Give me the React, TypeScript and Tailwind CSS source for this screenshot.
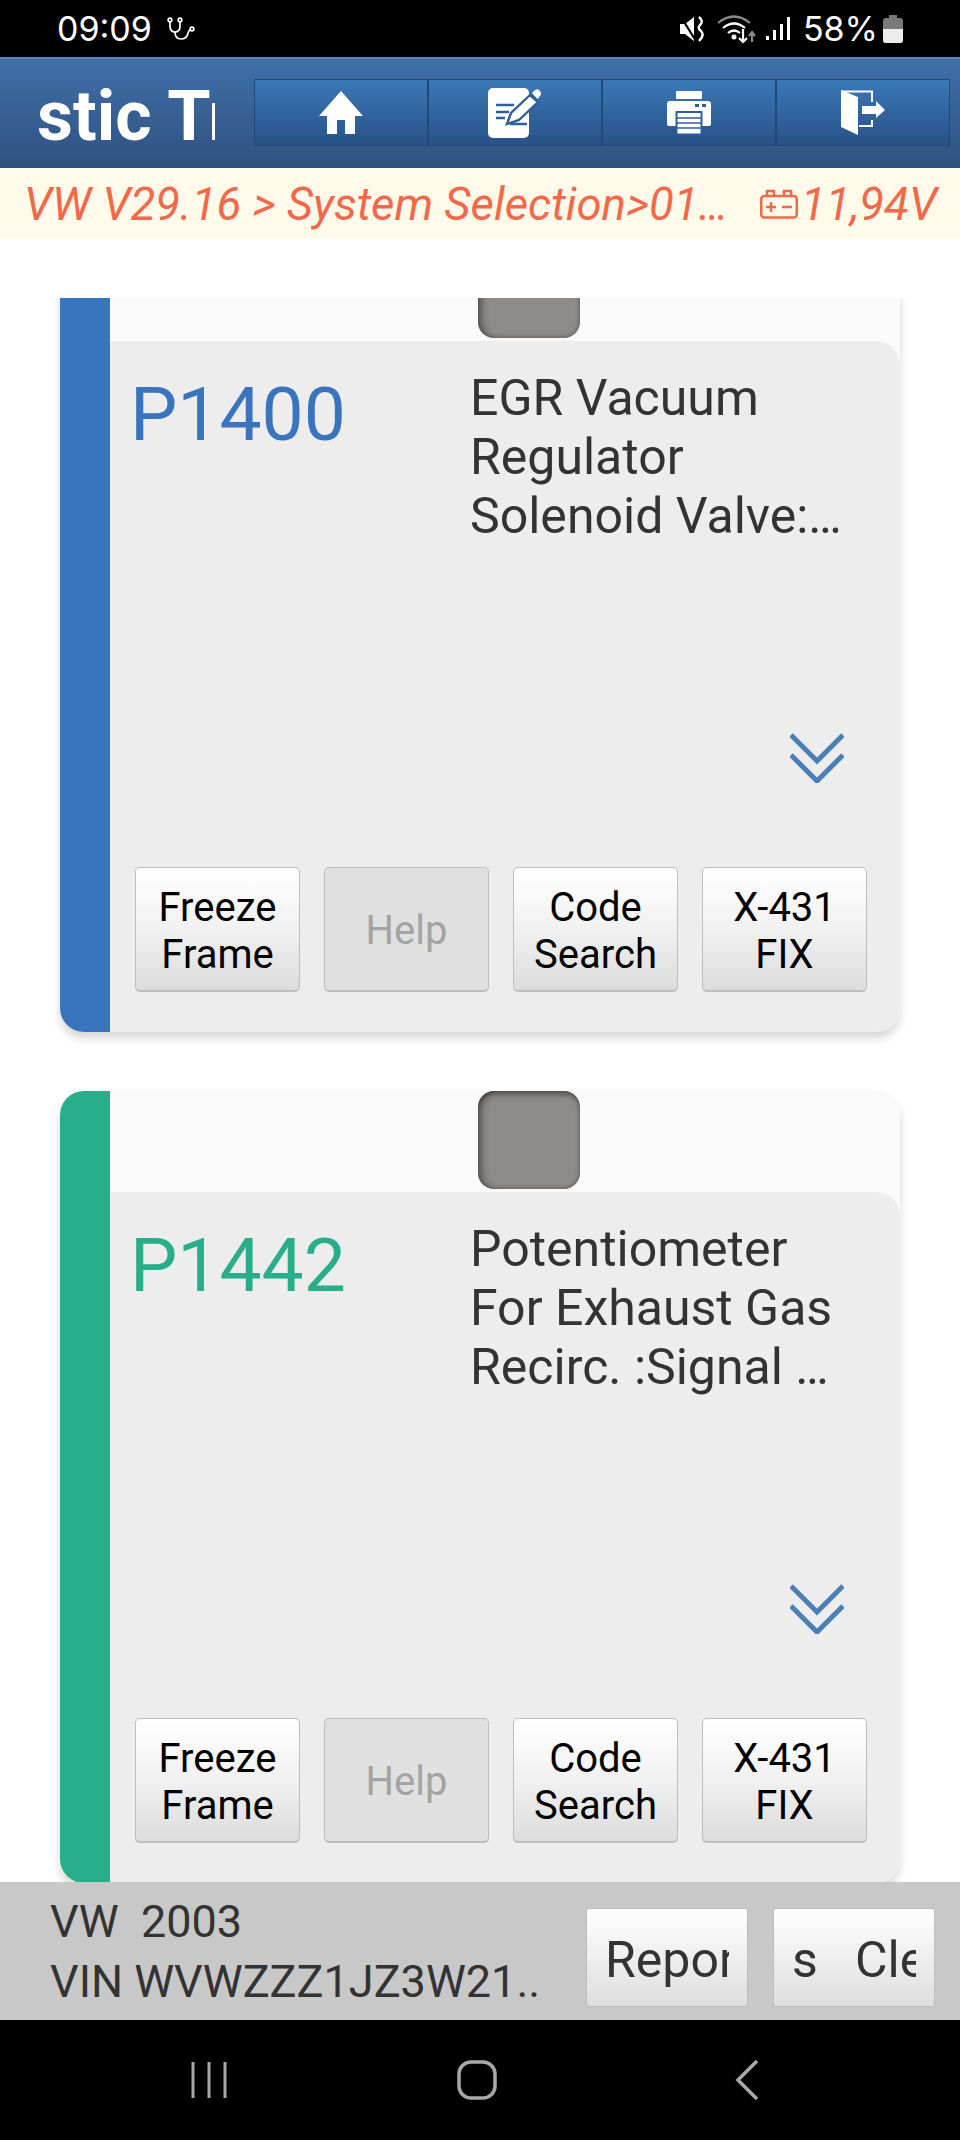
function HomeIcon() {
  return (
    <svg width="44" height="44" viewBox="0 0 44 44" fill="white">
      <path d="M22 0 L44 25 H36 V43 H26 V29 H18 V43 H8 V25 H0 Z" />
    </svg>
  );
}

function NoteIcon() {
  return (
    <svg width="54" height="50" viewBox="0 0 54 50">
      <rect x="0" y="0" width="41" height="50" rx="5" fill="white" />
      <path d="M8 17H26M8 24H21M8 30H17M22 36H39" stroke="#2f5f98" strokeWidth="2.4" fill="none" />
      <path d="M19 36 L23 25 L42 7 L50 14 L31 32 Z" fill="white" stroke="#2f5f98" strokeWidth="2.4" />
      <path d="M44 5 L47 2 Q50 0 52 3 Q54 6 52 8 L49.5 11 Z" fill="white" />
    </svg>
  );
}

function PrinterIcon() {
  return (
    <svg width="44" height="44" viewBox="0 0 44 44">
      <rect x="9" y="0" width="26" height="8" rx="1" fill="white" />
      <path d="M3 10H41Q44 10 44 13V33Q44 35 41 35H3Q0 35 0 33V13Q0 10 3 10Z" fill="white" />
      <rect x="28" y="13" width="4" height="3" fill="#2f5f98" />
      <rect x="35" y="13" width="4" height="3" fill="#2f5f98" />
      <rect x="9.5" y="21" width="25" height="22.5" fill="white" stroke="#2f5f98" strokeWidth="2" />
      <path d="M10 27H34M10 32H34M10 37H34" stroke="#2f5f98" strokeWidth="1.6" />
    </svg>
  );
}

function ExitIcon() {
  return (
    <svg width="46" height="46" viewBox="0 0 46 46">
      <path d="M1 0 L18 7 V45 L1 37 Z" fill="white" />
      <path d="M2 1.5H32V12M32 30V36H19" stroke="white" strokeWidth="2" fill="none" />
      <path d="M22 16H36V11L45 20L36 28V24H22Z" fill="white" />
    </svg>
  );
}

function Chevrons() {
  return (
    <svg width="54" height="50" viewBox="0 0 54 50" fill="none" stroke="#4a7fb8" strokeWidth="5">
      <path d="M1 2 L27 28 L53 2" />
      <path d="M1 22 L27 48 L53 22" />
    </svg>
  );
}

function ActionButton({ top, bottom, disabled }: { top: string; bottom?: string; disabled?: boolean }) {
  return (
    <div
      className={
        disabled
          ? "w-[165px] h-[125px] pt-[3px] flex flex-col items-center justify-center rounded-[5px] border border-[#bdbdbd] border-b-2 bg-[#e0e0e0] text-[#a3a3a3] text-[40px] leading-[47px]"
          : "w-[165px] h-[125px] pt-[3px] flex flex-col items-center justify-center rounded-[5px] border border-[#bdbdbd] border-b-2 bg-gradient-to-b from-white via-[#f1f1f1] to-[#dcdcdc] text-black text-[40px] leading-[47px]"
      }
    >
      <span>{top}</span>
      {bottom && <span>{bottom}</span>}
    </div>
  );
}

function FaultCard({
  code,
  lines,
  stripClass,
  codeClass,
}: {
  code: string;
  lines: string[];
  stripClass: string;
  codeClass: string;
}) {
  return (
    <div className="flex shrink-0 h-[792px] rounded-[24px] shadow-[0_6px_10px_rgba(0,0,0,0.16)] overflow-hidden">
      <div className={"w-[50px] shrink-0 " + stripClass} />
      <div className="flex-1 flex flex-col bg-[#fafafa]">
        <div className="shrink-0 h-[101px]">
          <div className="ml-[368px] w-[102px] h-[98px] rounded-[16px] bg-[#8f8b88] shadow-[inset_7px_0_7px_-3px_rgba(0,0,0,0.38),inset_0_6px_6px_-3px_rgba(0,0,0,0.45),inset_-2px_-2px_4px_-1px_rgba(0,0,0,0.22)]" />
        </div>
        <div className="flex-1 flex flex-col bg-[#ededed] rounded-tr-[24px] pl-[25px] pr-[33px] pb-[40px] pt-[28px]">
          <div className="flex">
            <div className={"w-[340px] -ml-[5px] shrink-0 text-[75px] leading-[88px] mt-[1px] " + codeClass}>{code}</div>
            <div className="text-[50px] leading-[59px] text-[#333333] whitespace-nowrap">
              {lines.map((line) => (
                <div key={line}>{line}</div>
              ))}
            </div>
          </div>
          <div className="mt-auto mb-[84px] self-end mr-[23px]">
            <Chevrons />
          </div>
          <div className="flex gap-[24px]">
            <ActionButton top="Freeze" bottom="Frame" />
            <ActionButton top="Help" disabled />
            <ActionButton top="Code" bottom="Search" />
            <ActionButton top="X-431" bottom="FIX" />
          </div>
        </div>
      </div>
    </div>
  );
}

export default function App() {
  return (
    <div className="w-[960px] h-[2140px] flex flex-col overflow-hidden bg-white [font-family:Roboto,sans-serif]">
      {/* status bar */}
      <div className="h-[57px] shrink-0 bg-black text-white flex items-center pl-[57px] pr-[57px] text-[34px] [font-family:Inter,sans-serif]">
        <span>09:09</span>
        <svg className="ml-[14px]" width="30" height="26" viewBox="0 0 30 26" fill="none" stroke="white" strokeWidth="1.7">
          <circle cx="4" cy="4" r="1.8" />
          <circle cx="14" cy="4" r="1.8" />
          <circle cx="26" cy="13" r="1.8" />
          <path d="M4 6V10Q4 16 9 16Q14 16 14 10V6" />
          <path d="M9 16Q9 23 15 23Q21 23 22 17Q23 14 24.5 13.5" />
        </svg>
        <div className="ml-auto flex items-center">
          <svg width="26" height="26" viewBox="0 0 26 26" fill="white">
            <path d="M1 8H6L15 1V25L6 18H1Z" />
            <path d="M20 1 Q25 5 21 9 Q18 12 22 15 Q26 19 20 25" stroke="white" strokeWidth="2.4" fill="none" />
            <path d="M2 1L17 25" stroke="black" strokeWidth="2.2" />
          </svg>
          <svg className="ml-[12px]" width="41" height="30" viewBox="0 0 41 30" fill="none" stroke="white" strokeWidth="2.2">
            <path d="M1 9 Q17 -4 33 9" stroke="#8a8a8a" />
            <path d="M6 14 Q17 5 28 14" />
            <path d="M11 19 Q17 14 23 19" />
            <circle cx="17" cy="23" r="1.4" fill="white" />
            <path d="M26 15V28M22 24L26 28L30 24" />
            <path d="M35 28V19M32 22L35 18L38 22" stroke="#8a8a8a" />
          </svg>
          <svg className="ml-[7px]" width="25" height="26" viewBox="0 0 25 26" fill="white">
            <rect x="1" y="20" width="3" height="4" />
            <rect x="8" y="14" width="3" height="10" />
            <rect x="15" y="8" width="3" height="16" />
            <rect x="22" y="1" width="3" height="23" />
          </svg>
          <span className="ml-[13px]">58%</span>
          <svg className="ml-[5px]" width="20" height="28" viewBox="0 0 20 28">
            <path d="M6 0H14V3H17Q20 3 20 6V25Q20 28 17 28H3Q0 28 0 25V6Q0 3 3 3H6Z" fill="#7a7a7a" />
            <path d="M0 14H20V25Q20 28 17 28H3Q0 28 0 25Z" fill="#ececec" />
          </svg>
        </div>
      </div>

      {/* header */}
      <div className="h-[111px] shrink-0 flex items-start pt-[20px] bg-gradient-to-b from-[#3f6fa9] to-[#2f5280] border-t-2 border-[#5a84bb]">
        <div className="ml-[37px] mt-[4px] w-[178px] h-[67px] overflow-hidden text-white font-bold text-[70px] leading-[67px] whitespace-nowrap">
          stic Tr
        </div>
        <div className="ml-[39px] w-[696px] h-[67px] flex border border-[#1f4a78]">
          <div className="flex-1 flex items-center justify-center bg-gradient-to-b from-[#3a78b8] to-[#295287] border-r-2 border-[#1f4a78]">
            <HomeIcon />
          </div>
          <div className="flex-1 flex items-center justify-center bg-gradient-to-b from-[#3a78b8] to-[#295287] border-r-2 border-[#1f4a78]">
            <NoteIcon />
          </div>
          <div className="flex-1 flex items-center justify-center bg-gradient-to-b from-[#3a78b8] to-[#295287] border-r-2 border-[#1f4a78]">
            <PrinterIcon />
          </div>
          <div className="flex-1 flex items-center justify-center bg-gradient-to-b from-[#3a78b8] to-[#295287]">
            <ExitIcon />
          </div>
        </div>
      </div>

      {/* breadcrumb */}
      <div className="h-[70px] shrink-0 bg-[#fffaea] text-[#f2694a] italic text-[45.5px] flex items-center pt-[4px] pl-[24px] pr-[23px]">
        <span className="whitespace-nowrap">VW V29.16 &gt; System Selection&gt;01…</span>
        <svg className="ml-auto -mt-[2px]" width="38" height="30" viewBox="0 0 38 30" fill="none" stroke="#f2694a" strokeWidth="2.5">
          <rect x="1.25" y="7" width="35.5" height="21.5" rx="3" />
          <path d="M7 7V2H14V7M24 7V2H31V7" />
          <path d="M6 18H16M11 13V23M22 18H32" />
        </svg>
        <span className="ml-[3px] whitespace-nowrap">11,94V</span>
      </div>

      {/* fault list */}
      <div className="flex-1 min-h-0 pt-[60px]">
        <div className="h-full overflow-hidden px-[60px]">
          <div className="flex flex-col gap-[59px] -mt-[58px] pb-[20px]">
            <FaultCard
              code="P1400"
              lines={["EGR Vacuum", "Regulator", "Solenoid Valve:…"]}
              stripClass="bg-[#3974bf]"
              codeClass="text-[#3974bf]"
            />
            <FaultCard
              code="P1442"
              lines={["Potentiometer", "For Exhaust Gas", "Recirc. :Signal …"]}
              stripClass="bg-[#29ae8b]"
              codeClass="text-[#29ae8b]"
            />
          </div>
        </div>
      </div>

      {/* footer */}
      <div className="h-[138px] shrink-0 bg-[#c8c8c8] flex items-center pl-[50px] pr-[25px]">
        <div className="mt-[1px] text-[#333333] text-[45px] leading-[60px] whitespace-pre">
          <div>VW  2003</div>
          <div>VIN WVWZZZ1JZ3W21..</div>
        </div>
        <div className="ml-auto mt-[12px] flex gap-[25px]">
          <div className="w-[162px] h-[99px] px-[18px] pt-[6px] flex items-center overflow-hidden rounded-[3px] border border-[#bdbdbd] bg-gradient-to-b from-white to-[#dedede] text-[#333333] text-[50px]">
            <span className="block w-full overflow-hidden whitespace-pre">Reports</span>
          </div>
          <div className="w-[162px] h-[99px] px-[18px] pt-[6px] flex items-center overflow-hidden rounded-[3px] border border-[#bdbdbd] bg-gradient-to-b from-white to-[#dedede] text-[#333333] text-[50px]">
            <span className="block w-full overflow-hidden whitespace-pre">s   Clear</span>
          </div>
        </div>
      </div>

      {/* nav bar */}
      <div className="h-[120px] shrink-0 bg-black flex items-center">
        <svg className="ml-[190px]" width="40" height="40" viewBox="0 0 40 40" stroke="#a8a8a8" strokeWidth="3">
          <path d="M3 2V38M19 2V38M35 2V38" />
        </svg>
        <svg className="ml-[227px]" width="40" height="40" viewBox="0 0 40 40" fill="none" stroke="#a8a8a8" strokeWidth="3.5">
          <rect x="2" y="2" width="36" height="36" rx="12" />
        </svg>
        <svg className="ml-[238px]" width="24" height="42" viewBox="0 0 24 42" fill="none" stroke="#a8a8a8" strokeWidth="3.5">
          <path d="M22 2 L3 21 L22 40" />
        </svg>
      </div>
    </div>
  );
}
